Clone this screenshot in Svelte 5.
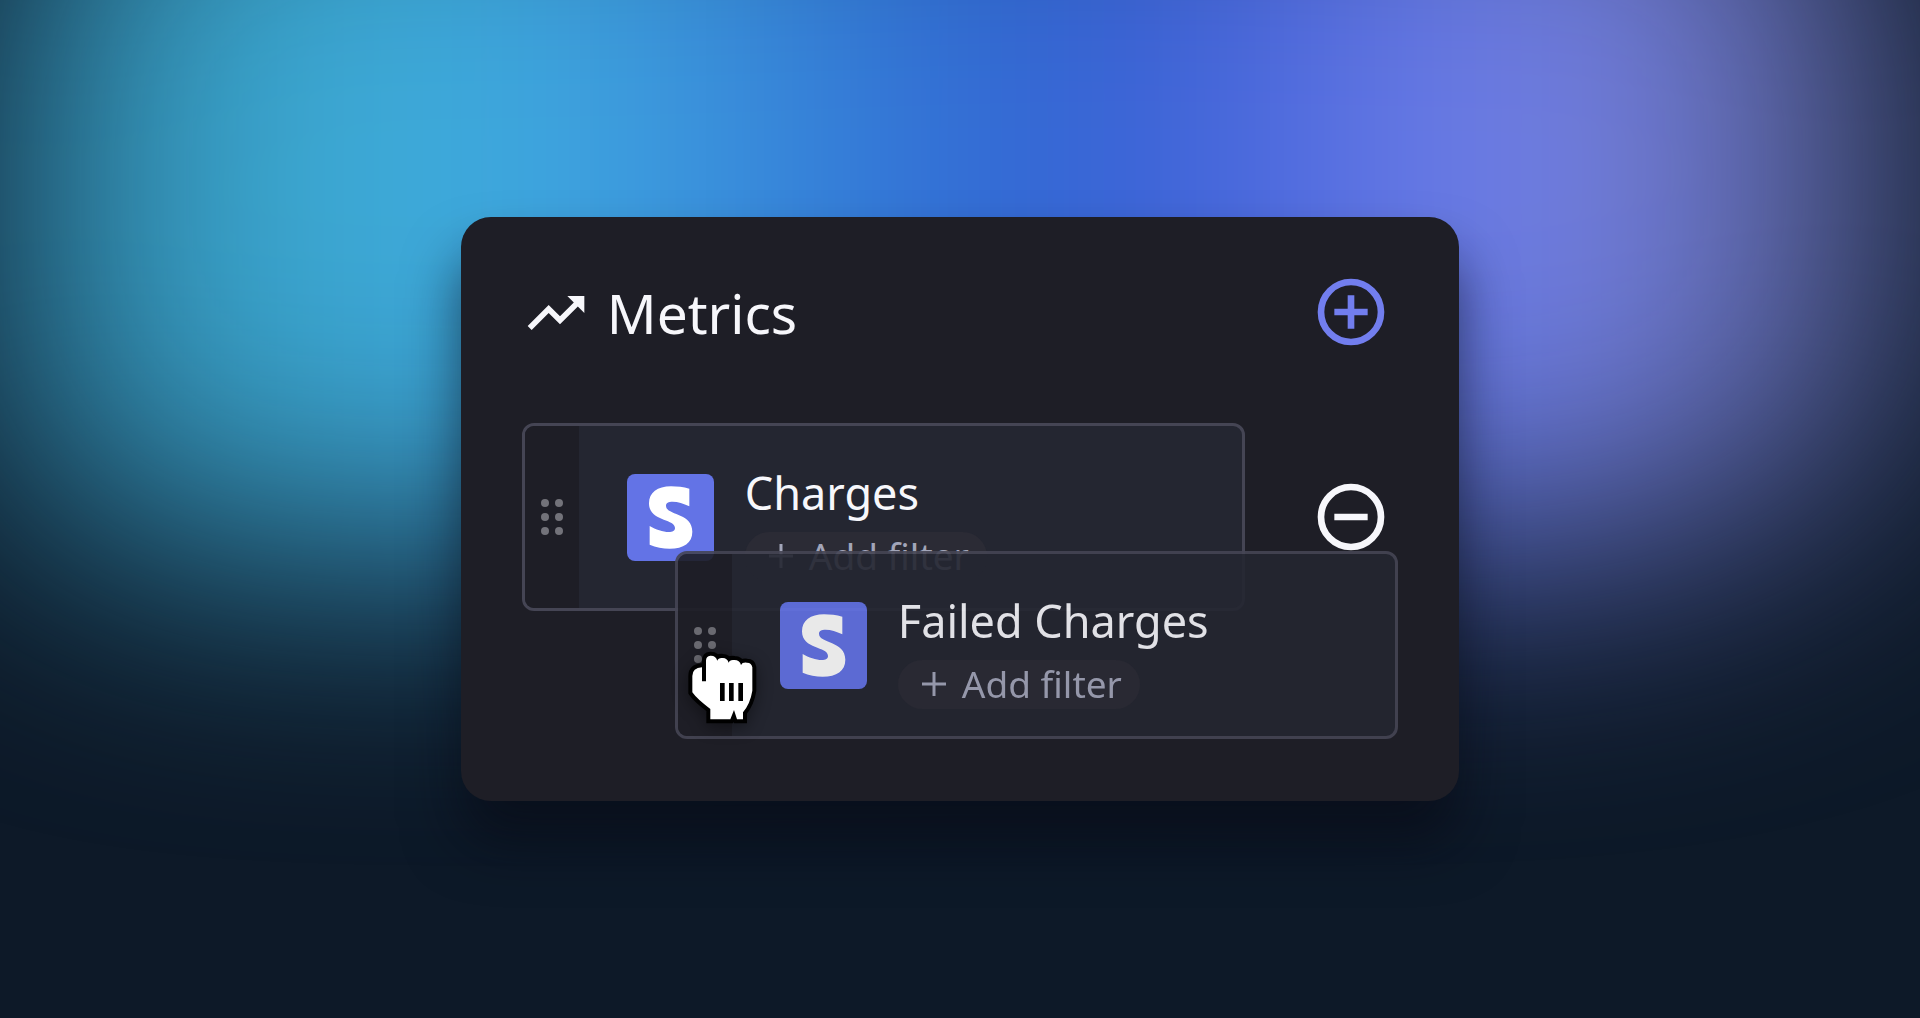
<script>
	const metrics = [
		{ name: 'Charges', dragging: false },
		{ name: 'Failed Charges', dragging: true }
	];

	const dots = [
		[4, 4], [18, 4],
		[4, 18], [18, 18],
		[4, 32], [18, 32]
	];
</script>

<div class="scene">
	<div class="glow"></div>

	<section class="card">
		<header>
			<h1>
				<svg class="trend" viewBox="0 0 24 24" aria-hidden="true">
					<path d="M16 6l2.29 2.29-4.88 4.88-4-4L2 16.59 3.41 18l6-6 4 4 6.3-6.29L22 12V6z" />
				</svg>
				Metrics
			</h1>
			<button class="round add" aria-label="Add metric">
				<svg viewBox="0 0 24 24">
					<circle cx="12" cy="12" r="9" />
					<path d="M7 12h10M12 7v10" />
				</svg>
			</button>
		</header>

		<ul>
			{#each metrics as metric}
				<li class:dragging={metric.dragging}>
					<div class="metric">
						<div class="handle">
							<svg viewBox="0 0 22 36" aria-hidden="true">
								{#each dots as [x, y]}
									<circle cx={x} cy={y} r="4" />
								{/each}
							</svg>
						</div>
						<svg class="logo" viewBox="0 0 261 261" aria-hidden="true">
							<rect width="261" height="261" rx="24" />
							<path d="M187 44v53c-18-9-34-14-50-14-13 0-20 4-20 12 0 30 79 20 79 78 0 34-26 51-68 51-20 0-42-4-60-12v-56c18 11 40 18 57 18 12 0 19-4 19-12 0-29-78-19-78-74 0-32 25-51 66-51 19 0 37 2 55 7z" />
						</svg>
						<div class="info">
							<h2>{metric.name}</h2>
							<button class="filter">
								<svg viewBox="0 0 24 24" aria-hidden="true"><path d="M0 12h24M12 0v24" /></svg>
								Add filter
							</button>
						</div>
					</div>
					{#if metric.dragging}
						<svg class="grab" viewBox="50 145 216 234" aria-hidden="true">
							<path class="edge" d="M95 242V200Q66 202 66 226V275Q80 295 120 325V356H180L191 328L200 356H218V335Q240 308 246 270V200Q244 186 230 186Q216 184 212 193Q208 178 192 178Q178 176 175 186Q170 172 158 172Q144 170 141 180Q136 164 120 165Q107 166 107 180V242Z" />
							<path class="hand" d="M95 242V200Q66 202 66 226V275Q80 295 120 325V356H180L191 328L200 356H218V335Q240 308 246 270V200Q244 186 230 186Q216 184 212 193Q208 178 192 178Q178 176 175 186Q170 172 158 172Q144 170 141 180Q136 164 120 165Q107 166 107 180V242Z" />
							<path class="lines" d="M156 247V301M183 247V301M211 247V301" />
						</svg>
					{:else}
						<button class="round" aria-label="Remove {metric.name}">
							<svg viewBox="0 0 24 24">
								<circle cx="12" cy="12" r="9" />
								<path d="M7 12h10" />
							</svg>
						</button>
					{/if}
				</li>
			{/each}
		</ul>
	</section>
</div>

<style>
	:global(body) {
		margin: 0;
		background: #0d1928;
	}

	.scene {
		position: relative;
		display: flex;
		align-items: center;
		justify-content: center;
		min-height: 100vh;
		overflow: hidden;
		font-family: "Noto Sans", sans-serif;
		color: #f7f7fb;
	}

	.glow {
		position: absolute;
		top: -20%;
		left: 0;
		right: 1%;
		height: 74%;
		border-radius: 14% 14% 22% 14% / 30% 30% 24% 18%;
		background: linear-gradient(90deg, #308aac 0%, #3aa4cc 14%, #40b2e0 23%, #3c96de 36%, #2d66d2 52%, #4060d8 63%, #7080ec 77%, #7680dc 86%, #545c90 97%);
		filter: blur(132px);
	}

	.card {
		position: relative;
		box-sizing: border-box;
		width: 52%;
		padding: 55px 68px 54px 61px;
		border-radius: 30px;
		background: #1e1e26;
		box-shadow: 0 40px 56px rgba(6, 8, 18, 0.6);
	}

	header {
		display: flex;
		align-items: center;
		justify-content: space-between;
		margin-bottom: 71px;
	}

	h1 {
		display: flex;
		align-items: center;
		gap: 17px;
		margin: 0;
		padding-top: 2px;
		font-size: 55px;
		font-weight: 400;
		line-height: 78px;
	}

	.trend {
		width: 68px;
		height: 68px;
		fill: currentColor;
	}

	button {
		border: 0;
		padding: 0;
		background: none;
		font: inherit;
		color: inherit;
		cursor: pointer;
	}

	.round {
		flex: none;
		width: 80px;
		height: 80px;
	}

	.round svg {
		display: block;
		fill: none;
		stroke: currentColor;
		stroke-width: 2;
	}

	.add {
		color: #727eee;
	}

	ul {
		position: relative;
		min-height: 324px;
		margin: 0;
		padding: 0;
		list-style: none;
	}

	li {
		display: flex;
		align-items: center;
		gap: 66px;
	}

	.metric {
		flex: 1;
		display: flex;
		align-items: center;
		box-sizing: border-box;
		height: 188px;
		border: 3px solid #454554;
		border-radius: 12px;
		background: #242631;
		overflow: hidden;
	}

	/* the row being dragged floats over the list */
	.dragging {
		position: absolute;
		top: 128px;
		left: 153px;
		right: -7px;
	}

	.dragging .metric {
		opacity: 0.9;
	}

	.handle {
		display: flex;
		align-items: center;
		justify-content: center;
		align-self: stretch;
		width: 54px;
		background: #1e1e26;
	}

	.handle svg {
		width: 22px;
		height: 36px;
		fill: #73737a;
	}

	.logo {
		width: 87px;
		height: 87px;
		margin: 0 31px 0 48px;
	}

	.logo rect {
		fill: #6373e6;
	}

	.logo path {
		fill: #fff;
	}

	.info {
		padding-top: 7px;
	}

	h2 {
		margin: 0;
		font-size: 45px;
		font-weight: 400;
		line-height: 64px;
		white-space: nowrap;
	}

	.filter {
		display: flex;
		align-items: center;
		gap: 16px;
		height: 49px;
		margin-top: 7px;
		padding: 0 18px 0 24px;
		border-radius: 25px;
		background: #2b2b35;
		color: #a2a5b9;
		font-size: 37px;
		line-height: 48px;
		white-space: nowrap;
	}

	.filter svg {
		width: 24px;
		height: 24px;
		stroke: currentColor;
		stroke-width: 3;
	}

	.grab {
		position: absolute;
		top: 98px;
		left: 12px;
		width: 72px;
		height: 78px;
		filter: drop-shadow(0 4px 8px rgba(0, 0, 0, 0.4));
	}

	.edge {
		fill: #000;
		stroke: #000;
		stroke-width: 24;
	}

	.hand {
		fill: #fff;
	}

	.lines {
		stroke: #000;
		stroke-width: 14;
	}
</style>
